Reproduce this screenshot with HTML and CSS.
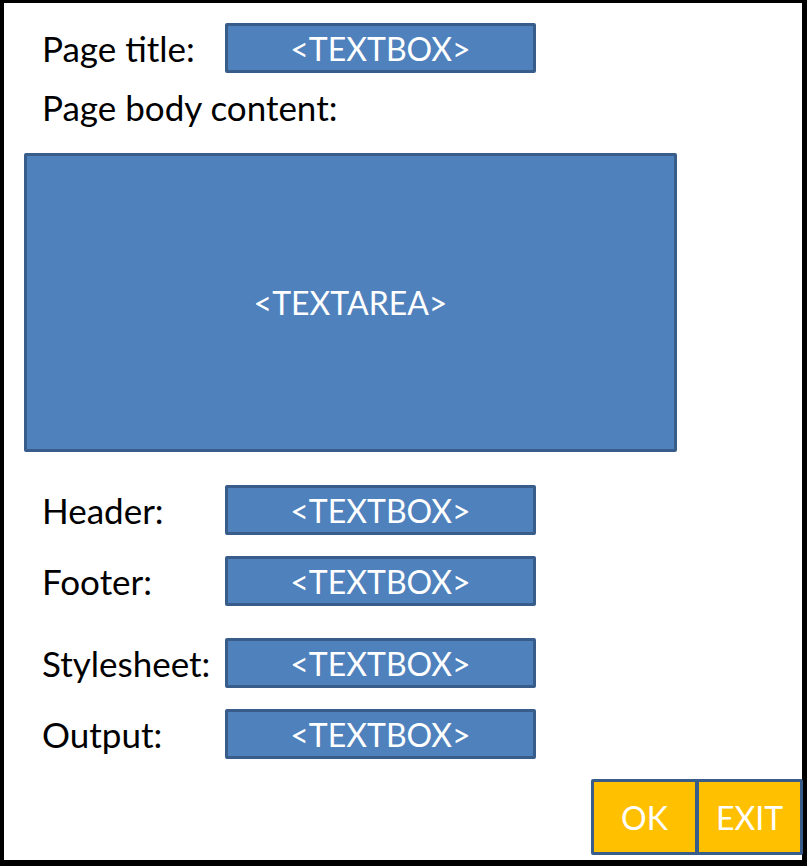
FILE: index.html
```html
<!DOCTYPE html>
<html>
<head>
<meta charset="utf-8">
<link rel="stylesheet" href="styles.css">
</head>
<body>
<div class="frame">
  <div class="row row-title">
    <span class="label">Page title:</span>
    <div class="box">&lt;TEXTBOX&gt;</div>
  </div>
  <div class="label label-body">Page body content:</div>
  <div class="area">&lt;TEXTAREA&gt;</div>
  <div class="row row-header">
    <span class="label">Header:</span>
    <div class="box">&lt;TEXTBOX&gt;</div>
  </div>
  <div class="row row-footer">
    <span class="label">Footer:</span>
    <div class="box">&lt;TEXTBOX&gt;</div>
  </div>
  <div class="row row-style">
    <span class="label">Stylesheet:</span>
    <div class="box">&lt;TEXTBOX&gt;</div>
  </div>
  <div class="row row-output">
    <span class="label">Output:</span>
    <div class="box">&lt;TEXTBOX&gt;</div>
  </div>
  <div class="buttons">
    <div class="btn btn-ok">OK</div>
    <div class="btn btn-exit">EXIT</div>
  </div>
</div>
</body>
</html>
```

FILE: styles.css
```css
html, body {
  margin: 0;
  padding: 0;
  background: #ffffff;
}
body {
  font-family: "Lato", "Open Sans", sans-serif;
}
.frame {
  box-sizing: border-box;
  width: 807px;
  height: 866px;
  border-style: solid;
  border-color: #000000;
  border-width: 3px 5px 6px 4px;
  display: flex;
  flex-direction: column;
  align-items: flex-start;
  padding: 20px 0 0 20px;
}
.row {
  display: flex;
  align-items: center;
  height: 50px;
}
.label {
  font-size: 35px;
  color: #000000;
  line-height: 50px;
  width: 183px;
  padding-left: 18px;
  white-space: nowrap;
}
.label-body {
  height: 50px;
  margin-top: 9px;
}
.box, .area {
  box-sizing: border-box;
  background: #4f81bd;
  border: 3px solid #385d8a;
  border-radius: 2px;
  color: #ffffff;
  font-size: 32px;
  display: flex;
  align-items: center;
  justify-content: center;
}
.box {
  width: 311px;
  height: 50px;
}
.area {
  width: 653px;
  height: 299px;
  margin-top: 21px;
}
.row-header { margin-top: 33px; }
.row-footer { margin-top: 21px; }
.row-style  { margin-top: 32px; }
.row-output { margin-top: 21px; }
.buttons {
  align-self: flex-end;
  margin-top: 20px;
  margin-right: -1px;
  display: flex;
  box-sizing: border-box;
  height: 76px;
  width: 212px;
  background: #385d8a;
  border: 3px solid #385d8a;
  border-radius: 2px;
  gap: 4px;
}
.btn {
  flex: 1;
  background: #ffc000;
  color: #ffffff;
  font-size: 32px;
  display: flex;
  align-items: center;
  justify-content: center;
}
```
